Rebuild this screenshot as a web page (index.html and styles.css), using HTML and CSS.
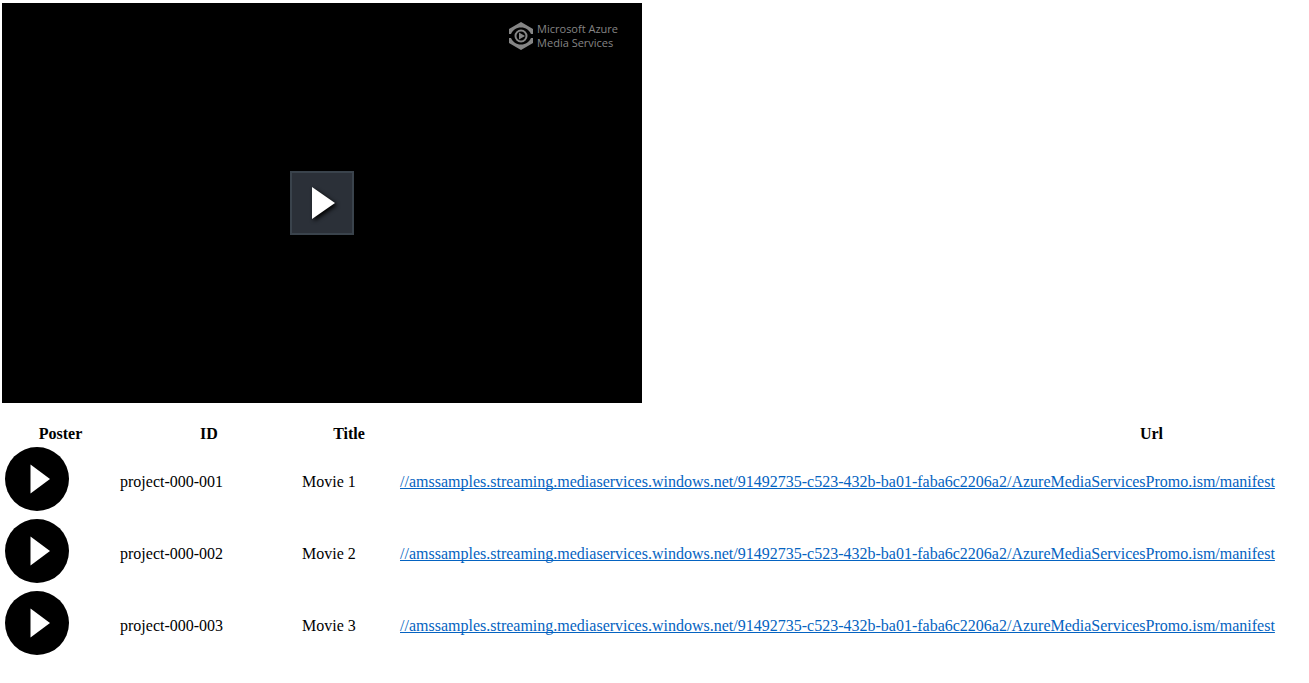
FILE: index.html
```html
<!DOCTYPE html>
<html lang="en">
<head>
<meta charset="utf-8">
<title>Media player</title>
<link rel="stylesheet" href="styles.css">
</head>
<body>
<main class="page">
  <section class="player" aria-label="Video player">
    <div class="brand">
      <svg class="brand-mark" viewBox="0 0 26 28" aria-hidden="true">
        <path class="brand-shell" d="M1 12V7L13 0L25 7V12H23C21 8 18 5.500 13 5.500S5 8 3 12Z"/>
        <path class="brand-shell" d="M1 16V21L13 28L25 21V16H23C21 20 18 22.500 13 22.500S5 20 3 16Z"/>
        <circle class="brand-ring" cx="13" cy="14" r="5.500"/>
        <path class="brand-shell" d="M11 10.500L17 14L11 17.500Z"/>
      </svg>
      <div class="brand-name">Microsoft Azure<br>Media Services</div>
    </div>
    <button class="big-play" type="button" aria-label="Play video">
      <svg class="big-play-icon" viewBox="0 0 24 32" aria-hidden="true"><path d="M0 0L23 16L0 32Z"/></svg>
    </button>
  </section>
  <div class="listing">
    <table class="movies">
      <colgroup><col class="col-poster"><col class="col-id"><col class="col-title"><col></colgroup>
      <thead>
        <tr><th scope="col">Poster</th><th scope="col">ID</th><th scope="col">Title</th><th scope="col">Url</th></tr>
      </thead>
      <tbody>
        <tr>
          <td><button class="poster" type="button" aria-label="Play Movie 1"><svg class="poster-icon" viewBox="0 0 64 64" aria-hidden="true"><circle cx="32" cy="32" r="32"/><path d="M25.500 17.500L45 32L25.500 46.500Z"/></svg></button></td>
          <td>project-000-001</td>
          <td>Movie 1</td>
          <td><a class="url" href="//amssamples.streaming.mediaservices.windows.net/91492735-c523-432b-ba01-faba6c2206a2/AzureMediaServicesPromo.ism/manifest">//amssamples.streaming.mediaservices.windows.net/91492735-c523-432b-ba01-faba6c2206a2/AzureMediaServicesPromo.ism/manifest</a></td>
        </tr>
        <tr>
          <td><button class="poster" type="button" aria-label="Play Movie 2"><svg class="poster-icon" viewBox="0 0 64 64" aria-hidden="true"><circle cx="32" cy="32" r="32"/><path d="M25.500 17.500L45 32L25.500 46.500Z"/></svg></button></td>
          <td>project-000-002</td>
          <td>Movie 2</td>
          <td><a class="url" href="//amssamples.streaming.mediaservices.windows.net/91492735-c523-432b-ba01-faba6c2206a2/AzureMediaServicesPromo.ism/manifest">//amssamples.streaming.mediaservices.windows.net/91492735-c523-432b-ba01-faba6c2206a2/AzureMediaServicesPromo.ism/manifest</a></td>
        </tr>
        <tr>
          <td><button class="poster" type="button" aria-label="Play Movie 3"><svg class="poster-icon" viewBox="0 0 64 64" aria-hidden="true"><circle cx="32" cy="32" r="32"/><path d="M25.500 17.500L45 32L25.500 46.500Z"/></svg></button></td>
          <td>project-000-003</td>
          <td>Movie 3</td>
          <td><a class="url" href="//amssamples.streaming.mediaservices.windows.net/91492735-c523-432b-ba01-faba6c2206a2/AzureMediaServicesPromo.ism/manifest">//amssamples.streaming.mediaservices.windows.net/91492735-c523-432b-ba01-faba6c2206a2/AzureMediaServicesPromo.ism/manifest</a></td>
        </tr>
      </tbody>
    </table>
  </div>
</main>
</body>
</html>
```
FILE: styles.css
```css
body {
  margin: 0;
  background: #fff;
  color: #000;
  font: 16px/19px "Liberation Serif", "Times New Roman", serif;
}

.page {
  padding: 3px 0 0 2px;
}

/* Video area */
.player {
  position: relative;
  display: flex;
  align-items: center;
  justify-content: center;
  max-width: 640px;
  aspect-ratio: 8 / 5;
  background: #000;
}

.brand {
  position: absolute;
  top: 19px;
  right: 24px;
  display: flex;
  align-items: center;
  gap: 3px;
  color: #858585;
}

.brand-mark {
  width: 26px;
  height: 28px;
}

.brand-shell {
  fill: currentColor;
}

.brand-ring {
  fill: none;
  stroke: currentColor;
  stroke-width: 2;
}

.brand-name {
  font: 11px/14px "Open Sans", "Noto Sans", sans-serif;
  white-space: nowrap;
}

.big-play {
  display: flex;
  align-items: center;
  justify-content: center;
  width: 64px;
  height: 64px;
  padding: 0 0 0 4px;
  border: 2px solid #3a434c;
  background: #2b3038;
  cursor: pointer;
}

.big-play-icon {
  width: 24px;
  height: 32px;
  overflow: visible;
  fill: #fff;
  filter: drop-shadow(2px 2px 2px #000);
}

/* Movie list: wider than the window, clipped on the right */
.listing {
  margin-top: 18px;
  overflow: hidden;
}

.movies {
  width: 1904px;
  table-layout: fixed;
  border-spacing: 2px;
}

.movies th,
.movies td {
  padding: 1px;
}

.movies td {
  white-space: nowrap;
}

.col-poster {
  width: 113px;
}

.col-id {
  width: 180px;
}

.col-title {
  width: 96px;
}

.poster {
  display: block;
  padding: 0 0 4px;
  border: 0;
  background: none;
  cursor: pointer;
}

.poster-icon {
  display: block;
  width: 64px;
  height: 64px;
}

.poster-icon path {
  fill: #fff;
}

.url {
  color: #0563c1;
  text-decoration-skip-ink: none;
}
```
